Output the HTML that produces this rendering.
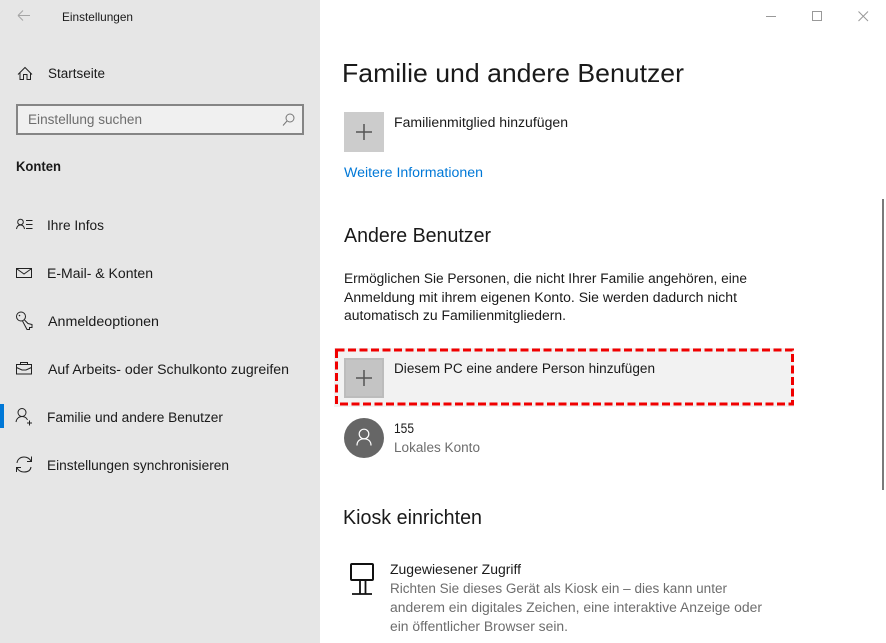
<!DOCTYPE html>
<html lang="de"><head><meta charset="utf-8"><title>Einstellungen</title>
<style>
html,body{margin:0;padding:0;width:886px;height:643px;overflow:hidden;background:#fff}
svg{display:block;position:absolute;left:0;top:0}
text{font-family:"Liberation Sans",sans-serif;font-size:13.5px;fill:#1a1a1a}
.g{fill:#6d6d6d}
.i{fill:none;stroke:#222;stroke-width:1}
</style></head><body>
<svg width="886" height="643" viewBox="0 0 886 643" xmlns="http://www.w3.org/2000/svg">
<rect x="0" y="0" width="320" height="643" fill="#e6e6e6"/>
<!-- title bar -->
<path d="M18 15.500H30M18 15.500L23 10.500M18 15.500L23 20.500" fill="none" stroke="#a5a5a5"/>
<text x="62" y="21" textLength="71" lengthAdjust="spacingAndGlyphs" style="font-size:12px">Einstellungen</text>
<!-- window buttons -->
<path d="M766 16.500H776" stroke="#999" fill="none"/>
<rect x="812.500" y="11.500" width="9" height="9" fill="none" stroke="#999"/>
<path d="M858.500 11.500L868 21M868 11.500L858.500 21" stroke="#999" fill="none"/>
<!-- home -->
<path class="i" d="M18 74.500L25 67.500L32 74.500M20 72.500V79.500H23.500V74.500H27V79.500H30.500V72.500"/>
<text x="48" y="78" textLength="57" lengthAdjust="spacingAndGlyphs">Startseite</text>
<!-- search -->
<rect x="17" y="105" width="286" height="29" fill="#f0f0f0" stroke="#858585" stroke-width="2"/>
<text x="28" y="124" class="g" textLength="114" lengthAdjust="spacingAndGlyphs">Einstellung suchen</text>
<circle cx="290" cy="118" r="4" fill="none" stroke="#777"/>
<path d="M287 121L283 125.500" stroke="#777" fill="none"/>
<text x="16" y="171" style="font-weight:bold" textLength="45" lengthAdjust="spacingAndGlyphs">Konten</text>
<!-- nav icons -->
<circle cx="20.500" cy="222" r="2.800" class="i"/>
<path class="i" d="M16.500 229C17 226 18.500 225 20.500 225S24 226 24.500 229M26 220.500H32.500M26 224.500H32.500M26 228.500H32.500"/>
<text x="47" y="230" textLength="57" lengthAdjust="spacingAndGlyphs">Ihre Infos</text>
<rect x="16.500" y="268.500" width="15" height="9" class="i"/>
<path class="i" d="M17 269L24 274L31 269"/>
<text x="47" y="278" textLength="106" lengthAdjust="spacingAndGlyphs">E-Mail- &amp; Konten</text>
<circle cx="21" cy="316.500" r="4.500" class="i"/>
<circle cx="19.500" cy="315.500" r="0.800" fill="#222"/>
<path class="i" d="M24.500 320L28 323.500L32 324.500V327.500H29.500V329.500H27L22.500 321"/>
<text x="48" y="326" textLength="111" lengthAdjust="spacingAndGlyphs">Anmeldeoptionen</text>
<rect x="16.500" y="364.500" width="15" height="9.500" class="i"/>
<path class="i" d="M20.500 364.500V362.500H27.500V364.500M16.500 367.500L22 370H26L31.500 367.500"/>
<text x="48" y="374" textLength="241" lengthAdjust="spacingAndGlyphs">Auf Arbeits- oder Schulkonto zugreifen</text>
<rect x="0" y="404" width="4" height="24" fill="#0078d7"/>
<circle cx="22" cy="412.500" r="4" class="i"/>
<path class="i" d="M16 422C16.500 418.500 19 416.500 22 416.500S26.500 417.500 27.500 420M27 423H32M29.500 420.500V425.500"/>
<text x="47" y="422" textLength="176" lengthAdjust="spacingAndGlyphs">Familie und andere Benutzer</text>
<path class="i" d="M17 463C17.500 459 20.500 457 24 457C27 457 29.500 458.500 31 461M31.500 456.500V461.500H27M31 467C30.500 470.500 27.500 472 24 472C21 472 18.500 470.500 17 468M16.500 472V467.500H21"/>
<text x="47" y="470" textLength="182" lengthAdjust="spacingAndGlyphs">Einstellungen synchronisieren</text>

<!-- main -->
<text x="342" y="82" style="font-size:26px" textLength="342" lengthAdjust="spacingAndGlyphs">Familie und andere Benutzer</text>
<rect x="344" y="112" width="40" height="40" fill="#cccccc"/>
<path d="M356 132H372M364 124V140" stroke="#555" stroke-width="1.500" fill="none"/>
<text x="394" y="127" textLength="174" lengthAdjust="spacingAndGlyphs">Familienmitglied hinzufügen</text>
<text x="344" y="177" style="fill:#0078d7" textLength="139" lengthAdjust="spacingAndGlyphs">Weitere Informationen</text>
<text x="344" y="242" style="font-size:20px" textLength="147" lengthAdjust="spacingAndGlyphs">Andere Benutzer</text>
<text x="344" y="283" textLength="403" lengthAdjust="spacingAndGlyphs">Ermöglichen Sie Personen, die nicht Ihrer Familie angehören, eine</text>
<text x="344" y="302" textLength="393" lengthAdjust="spacingAndGlyphs">Anmeldung mit ihrem eigenen Konto. Sie werden dadurch nicht</text>
<text x="344" y="320" textLength="222" lengthAdjust="spacingAndGlyphs">automatisch zu Familienmitgliedern.</text>

<rect x="334" y="348" width="460" height="59" fill="#f2f2f2"/>
<rect x="336.500" y="350" width="456" height="54" fill="none" stroke="#f00000" stroke-width="3" stroke-dasharray="8 3.500"/>
<rect x="344" y="358" width="40" height="40" fill="#c4c4c4"/>
<rect x="345" y="359" width="38" height="38" fill="none" stroke="#bcbcbc" stroke-width="2"/>
<path d="M356 378H372M364 370V386" stroke="#555" stroke-width="1.500" fill="none"/>
<text x="394" y="373" textLength="261" lengthAdjust="spacingAndGlyphs">Diesem PC eine andere Person hinzufügen</text>

<circle cx="364" cy="438" r="20" fill="#666"/>
<circle cx="364" cy="434" r="4.800" fill="none" stroke="#fff" stroke-width="1.200"/>
<path d="M357 445.500C357 441 360 438.800 364 438.800S371 441 371 445.500" fill="none" stroke="#fff" stroke-width="1.200"/>
<text x="394" y="433" textLength="20" lengthAdjust="spacingAndGlyphs">155</text>
<text x="394" y="452" class="g" textLength="86" lengthAdjust="spacingAndGlyphs">Lokales Konto</text>

<text x="343" y="524" style="font-size:20px" textLength="139" lengthAdjust="spacingAndGlyphs">Kiosk einrichten</text>
<rect x="351" y="564" width="22" height="16" rx="1" fill="none" stroke="#111" stroke-width="2"/>
<path d="M360 580V594M365.500 580V594M352 594H372" fill="none" stroke="#111" stroke-width="1.800"/>
<text x="390" y="574" textLength="131" lengthAdjust="spacingAndGlyphs">Zugewiesener Zugriff</text>
<text x="390" y="593" class="g" textLength="337" lengthAdjust="spacingAndGlyphs">Richten Sie dieses Gerät als Kiosk ein – dies kann unter</text>
<text x="390" y="612" class="g" textLength="372" lengthAdjust="spacingAndGlyphs">anderem ein digitales Zeichen, eine interaktive Anzeige oder</text>
<text x="390" y="631" class="g" textLength="178" lengthAdjust="spacingAndGlyphs">ein öffentlicher Browser sein.</text>

<rect x="882" y="199" width="2" height="291" fill="#7a7a7a"/>
</svg>
</body></html>
